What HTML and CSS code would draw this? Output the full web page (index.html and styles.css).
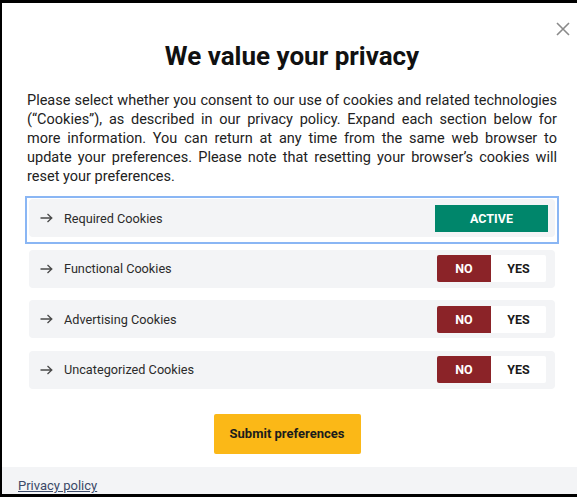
FILE: index.html
```html
<!DOCTYPE html>
<html lang="en">
<head>
<meta charset="utf-8">
<title>We value your privacy</title>
<link rel="stylesheet" href="styles.css">
</head>
<body>
<div class="modal">
  <button class="close" aria-label="Close">
    <svg width="14" height="14" viewBox="0 0 14 14"><path d="M1 1L13 13M13 1L1 13" stroke="#8a8a8a" stroke-width="1.6" fill="none"/></svg>
  </button>
  <div class="content">
    <h1 class="title">We value your privacy</h1>
    <p class="intro">Please select whether you consent to our use of cookies and related technologies (“Cookies”), as described in our privacy policy. Expand each section below for more information. You can return at any time from the same web browser to update your preferences. Please note that resetting your browser’s cookies will reset your preferences.</p>
    <div class="sections">
      <div class="section focused">
        <div class="row">
          <svg class="arrow" width="13" height="10" viewBox="0 0 13 10"><path d="M0.5 5H11.8M7.5 1L11.8 5L7.5 9" stroke="#4a4a4a" stroke-width="1.3" fill="none"/></svg>
          <span class="label">Required Cookies</span>
          <span class="active">ACTIVE</span>
        </div>
      </div>
      <div class="section">
        <div class="row">
          <svg class="arrow" width="13" height="10" viewBox="0 0 13 10"><path d="M0.5 5H11.8M7.5 1L11.8 5L7.5 9" stroke="#4a4a4a" stroke-width="1.3" fill="none"/></svg>
          <span class="label">Functional Cookies</span>
          <span class="toggle"><span class="no">NO</span><span class="yes">YES</span></span>
        </div>
      </div>
      <div class="section">
        <div class="row">
          <svg class="arrow" width="13" height="10" viewBox="0 0 13 10"><path d="M0.5 5H11.8M7.5 1L11.8 5L7.5 9" stroke="#4a4a4a" stroke-width="1.3" fill="none"/></svg>
          <span class="label">Advertising Cookies</span>
          <span class="toggle"><span class="no">NO</span><span class="yes">YES</span></span>
        </div>
      </div>
      <div class="section">
        <div class="row">
          <svg class="arrow" width="13" height="10" viewBox="0 0 13 10"><path d="M0.5 5H11.8M7.5 1L11.8 5L7.5 9" stroke="#4a4a4a" stroke-width="1.3" fill="none"/></svg>
          <span class="label">Uncategorized Cookies</span>
          <span class="toggle"><span class="no">NO</span><span class="yes">YES</span></span>
        </div>
      </div>
    </div>
    <div class="actions">
      <button class="submit">Submit preferences</button>
    </div>
  </div>
  <div class="footer">
    <a class="policy" href="#">Privacy policy</a>
  </div>
</div>
</body>
</html>
```

FILE: styles.css
```css
html, body {
  margin: 0;
  padding: 0;
}
body {
  background: #000;
  height: 497px;
  overflow: hidden;
  font-family: Roboto, "Liberation Sans", sans-serif;
}
.modal {
  position: relative;
  margin: 3px 0 0 2px;
  height: 491px;
  background: #fff;
  display: flex;
  flex-direction: column;
}
.close {
  position: absolute;
  top: 16px;
  right: 6px;
  width: 16px;
  height: 20px;
  padding: 0;
  border: 0;
  background: none;
  display: flex;
  align-items: center;
  justify-content: center;
}
.content {
  flex: 1;
  padding: 38px 20px 0 25px;
}
.title {
  margin: 0;
  font-size: 26px;
  line-height: 31px;
  font-weight: 700;
  color: #111;
  text-align: center;
}
.intro {
  margin: 19px 0 0;
  font-size: 14.5px;
  line-height: 19px;
  color: #222;
  text-align: justify;
}
.sections {
  margin-top: 13px;
  padding: 0 2px;
  display: flex;
  flex-direction: column;
  gap: 12.67px;
}
.section {
  position: relative;
}
.focused::after {
  content: "";
  position: absolute;
  top: -3px;
  left: -4px;
  right: -4px;
  bottom: -7px;
  border: 2px solid #8ab6f4;
}
.row {
  height: 38px;
  background: #f3f4f6;
  border-radius: 4px;
  display: flex;
  align-items: center;
  padding: 0 9px 0 11px;
}
.arrow {
  flex: none;
}
.label {
  margin-left: 11px;
  flex: 1;
  font-size: 12.7px;
  color: #2b2b2b;
}
.active {
  width: 113px;
  height: 27px;
  margin-right: -2px;
  background: #00866b;
  color: #fff;
  font-size: 12.5px;
  font-weight: 700;
  display: flex;
  align-items: center;
  justify-content: center;
}
.toggle {
  display: flex;
  height: 27px;
  border-radius: 2px;
  overflow: hidden;
  background: #fff;
}
.toggle span {
  display: flex;
  align-items: center;
  justify-content: center;
  font-size: 12.5px;
  font-weight: 700;
}
.no {
  width: 54px;
  background: #8b2328;
  color: #fff;
}
.yes {
  width: 55px;
  color: #1a1a1a;
}
.actions {
  margin-top: 25px;
  display: flex;
  justify-content: center;
  padding-right: 10px;
}
.submit {
  width: 147px;
  height: 40px;
  border: 0;
  border-radius: 2px;
  background: #fbb817;
  color: #1c1c1c;
  font-family: Roboto, "Liberation Sans", sans-serif;
  font-size: 13px;
  font-weight: 700;
}
.footer {
  height: 27px;
  background: #f3f4f6;
  padding: 10px 0 0 16px;
  box-sizing: border-box;
  line-height: 15px;
}
.policy {
  font-size: 13px;
  color: #3c4a68;
  text-decoration: underline;
}
```
